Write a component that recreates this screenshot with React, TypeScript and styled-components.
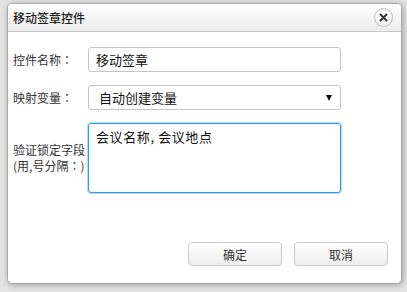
import React from "react";
import styled, { createGlobalStyle } from "styled-components";

const Global = createGlobalStyle`
  html, body { margin: 0; padding: 0; }
  body {
    background: #e4e4e4;
    font-family: "Noto Sans CJK SC", "Noto Sans", sans-serif;
    color: #333;
    height: 292px;
    overflow: hidden;
  }
`;

const Dialog = styled.div`
  margin: 3px 0 0 7px;
  width: 395px;
  height: 281px;
  box-sizing: border-box;
  background: #fff;
  border: 1px solid #a8a8a8;
  border-radius: 5px;
  box-shadow: 1px 1px 6px rgba(0, 0, 0, 0.3);
  display: flex;
  flex-direction: column;
  overflow: hidden;
`;

const Header = styled.div`
  height: 28px;
  box-sizing: border-box;
  display: flex;
  align-items: center;
  justify-content: space-between;
  padding: 0 8px 0 5px;
  background: linear-gradient(#ffffff, #ececec);
  border-bottom: 1px solid #c6c6c6;
`;

const Title = styled.div`
  font-size: 12px;
  font-weight: 500;
  color: #222;
`;

const Close = styled.div`
  width: 17px;
  height: 17px;
  border-radius: 50%;
  border: 1px solid #bdbdbd;
  background: linear-gradient(#ffffff, #eeeeee);
  display: flex;
  align-items: center;
  justify-content: center;
`;

const Body = styled.div`
  flex: 1;
  display: flex;
  flex-direction: column;
  padding: 15px 13px 17px 5px;
`;

const Row = styled.div`
  display: flex;
  align-items: center;
  margin-bottom: 13px;
`;

const Label = styled.div`
  width: 75px;
  font-size: 12px;
  line-height: 16px;
  color: #333;
  flex-shrink: 0;
  white-space: nowrap;
`;

const Colon = styled.span`
  font-family: "Noto Sans CJK TC", "Noto Sans CJK SC", sans-serif;
`;

const Field = styled.div<{ $pad?: number }>`
  width: 253px;
  height: 25px;
  box-sizing: border-box;
  border: 1px solid #c4c4c4;
  border-radius: 3px;
  display: flex;
  align-items: center;
  justify-content: space-between;
  padding: 0 8px 0 ${(p) => p.$pad ?? 7}px;
  font-size: 13px;
  color: #111;
  background: #fff;
`;

const Arrow = styled.span`
  width: 0;
  height: 0;
  border-left: 3.5px solid transparent;
  border-right: 3.5px solid transparent;
  border-top: 6px solid #111;
`;

const Area = styled.div`
  width: 253px;
  height: 70px;
  box-sizing: border-box;
  border: 1px solid #2a9bef;
  box-shadow: 0 0 0 1px rgba(42, 155, 239, 0.35);
  border-radius: 3px;
  padding: 4px 7px;
  font-size: 13px;
  line-height: 17px;
  color: #111;
  letter-spacing: 0.6px;
`;

const Footer = styled.div`
  margin-top: auto;
  display: flex;
  justify-content: flex-end;
  gap: 12px;
`;

const Button = styled.div`
  width: 94px;
  height: 24px;
  box-sizing: border-box;
  border: 1px solid #cacaca;
  border-radius: 4px;
  background: linear-gradient(#ffffff, #eeeeee);
  display: flex;
  align-items: center;
  justify-content: center;
  font-size: 12px;
  color: #333;
`;

export default function App() {
  return (
    <>
      <Global />
      <Dialog>
        <Header>
          <Title>移动签章控件</Title>
          <Close>
            <svg width="9" height="9" viewBox="0 0 9 9">
              <path d="M1.5 1.5 L7.5 7.5 M7.5 1.5 L1.5 7.5" stroke="#333" strokeWidth="2" strokeLinecap="round" />
            </svg>
          </Close>
        </Header>
        <Body>
          <Row>
            <Label>
              控件名称<Colon>：</Colon>
            </Label>
            <Field>移动签章</Field>
          </Row>
          <Row>
            <Label>
              映射变量<Colon>：</Colon>
            </Label>
            <Field $pad={10}>
              自动创建变量
              <Arrow />
            </Field>
          </Row>
          <Row>
            <Label>
              验证锁定字段
              <br />
              (用,号分隔<Colon>：</Colon>)
            </Label>
            <Area>会议名称, 会议地点</Area>
          </Row>
          <Footer>
            <Button>确定</Button>
            <Button>取消</Button>
          </Footer>
        </Body>
      </Dialog>
    </>
  );
}
